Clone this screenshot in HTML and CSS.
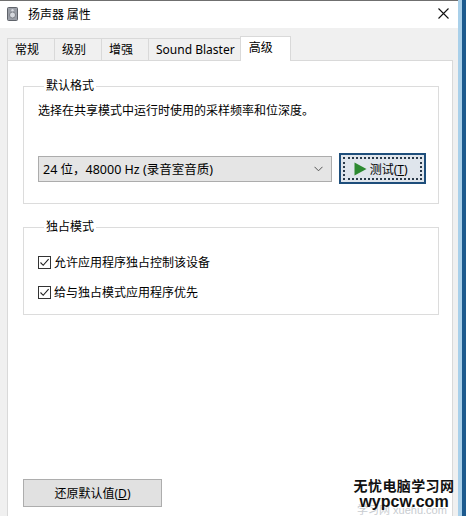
FILE: index.html
```html
<!DOCTYPE html>
<html lang="zh-CN">
<head>
<meta charset="utf-8">
<title>扬声器 属性</title>
<link rel="stylesheet" href="styles.css">
</head>
<body>
<div class="frame">
  <div class="window">
    <div class="titlebar">
      <svg class="app-icon" width="11" height="14" viewBox="0 0 11 14">
        <rect x="0.5" y="0.5" width="10" height="13" rx="1" fill="#9a9ea6" stroke="#5f636a"/>
        <circle cx="5.5" cy="8" r="3" fill="#d6d9de" stroke="#6d7179" stroke-width="0.8"/>
        <circle cx="5.5" cy="3.2" r="1.2" fill="#d6d9de"/>
      </svg>
      <span class="title">扬声器 属性</span>
      <svg class="close" width="11" height="11" viewBox="0 0 11 11">
        <path d="M0.5 0.5 L10.5 10.5 M10.5 0.5 L0.5 10.5" stroke="#111" stroke-width="1.1" fill="none"/>
      </svg>
    </div>
    <div class="content">
      <div class="tabs">
        <div class="tab">常规</div>
        <div class="tab">级别</div>
        <div class="tab">增强</div>
        <div class="tab">Sound Blaster</div>
        <div class="tab active">高级</div>
      </div>
      <div class="panel">
        <fieldset class="group group-format">
          <legend>默认格式</legend>
          <p class="desc">选择在共享模式中运行时使用的采样频率和位深度。</p>
          <div class="format-row">
            <div class="select">
              <span class="select-text">24 位，48000 Hz (录音室音质)</span>
              <svg class="chevron" width="9" height="6" viewBox="0 0 9 6">
                <path d="M0.5 0.8 L4.5 4.8 L8.5 0.8" stroke="#555" stroke-width="1" fill="none"/>
              </svg>
            </div>
            <button class="test-btn">
              <span class="focus-rect">
                <svg class="play" width="13" height="14" viewBox="0 0 13 14">
                  <path d="M0.5 0.5 L12.5 7 L0.5 13.5 Z" fill="#2c8a32"/>
                </svg>
                <span>测试(<u>T</u>)</span>
              </span>
            </button>
          </div>
        </fieldset>
        <fieldset class="group group-exclusive">
          <legend>独占模式</legend>
          <label class="check-row">
            <span class="checkbox"><svg width="11" height="11" viewBox="0 0 11 11"><path d="M1.5 5.5 L4.2 8.3 L9.6 2.2" stroke="#222" stroke-width="1.1" fill="none"/></svg></span>
            <span>允许应用程序独占控制该设备</span>
          </label>
          <label class="check-row">
            <span class="checkbox"><svg width="11" height="11" viewBox="0 0 11 11"><path d="M1.5 5.5 L4.2 8.3 L9.6 2.2" stroke="#222" stroke-width="1.1" fill="none"/></svg></span>
            <span>给与独占模式应用程序优先</span>
          </label>
        </fieldset>
        <button class="restore-btn">还原默认值(<u>D</u>)</button>
      </div>
    </div>
  </div>
  <div class="edge"></div>
  <div class="desktop"></div>
  <div class="watermark">
    <div class="wm-ghost">学习网 xuehu.com</div>
    <div class="wm-cn">无忧电脑学习网</div>
    <div class="wm-en">wypcw.com</div>
  </div>
</div>
</body>
</html>
```
FILE: styles.css
```css
* { box-sizing: border-box; }
html, body { margin: 0; padding: 0; }
body {
  width: 466px;
  height: 516px;
  overflow: hidden;
  font-family: "Noto Sans", "Noto Sans CJK SC", sans-serif;
  font-size: 12px;
  color: #000;
  background: #1d5a8f;
}
.frame {
  position: relative;
  display: flex;
  height: 516px;
  overflow: hidden;
}
.window {
  width: 458px;
  background: #f0f0f0;
  display: flex;
  flex-direction: column;
  overflow: hidden;
}
.edge { width: 4px; background: #a9d0ea; }
.desktop { flex: 1; background: #1c5a8e; }

.titlebar {
  flex: none;
  height: 28px;
  background: #fff;
  border-top: 1px solid #6f6f6f;
  display: flex;
  align-items: center;
  padding: 0 0 2px 7px;
}
.app-icon { flex: none; }
.title {
  margin-left: 10px;
  font-family: "Noto Sans CJK SC", sans-serif;
  font-size: 12px;
  line-height: 16px;
}
.close { margin-left: auto; margin-right: 9px; }

.content {
  flex: none;
  padding: 8px 5px 0 7px;
}
.tabs {
  display: flex;
  align-items: flex-end;
  height: 24px;
}
.tab {
  height: 22px;
  min-width: 48px;
  padding: 0 5px 0 7px;
  border: 1px solid #d9d9d9;
  border-bottom: none;
  margin-right: -1px;
  background: #f0f0f0;
  line-height: 21px;
  white-space: nowrap;
}
.tab.active {
  position: relative;
  z-index: 1;
  height: 25px;
  margin-bottom: -1px;
  background: #fff;
  line-height: 21px;
  padding-left: 8px;
  min-width: 51px;
}
.panel {
  height: 460px;
  width: 446px;
  border: 1px solid #d9d9d9;
  background: #fff;
  padding: 0 13px 0 15px;
}
.group {
  margin: 0;
  border: 1px solid #dcdcdc;
  min-width: 0;
}
.group legend {
  margin-left: 6px;
  padding: 0 2px;
  line-height: 16px;
}
.group-format {
  margin-top: 17px;
  padding: 0 12px 19px 14px;
}
.desc {
  margin: 9px 0 0 0;
  line-height: 16px;
  white-space: nowrap;
}
.format-row {
  margin-top: 34px;
  height: 31px;
  display: flex;
  align-items: center;
  gap: 7px;
}
.select {
  width: 295px;
  height: 26px;
  background: #e5e5e5;
  border: 1px solid #acacac;
  display: flex;
  align-items: center;
  padding: 0 8px 0 4px;
}
.select-text { font-size: 12.5px; white-space: nowrap; }
.chevron { margin-left: auto; }
.test-btn {
  width: 87px;
  height: 31px;
  padding: 2px;
  border: 2px solid #1e4e7b;
  background: #dfe5ec;
  font: inherit;
  color: #000;
}
.focus-rect {
  display: flex;
  height: 100%;
  align-items: center;
  justify-content: center;
  gap: 3px;
  border: 2px dotted #2a3a4a;
  padding-right: 4px;
}
.play { flex: none; }

.group-exclusive {
  margin-top: 15px;
  padding: 0 0 14px 14px;
}
.check-row {
  display: flex;
  align-items: center;
  height: 16px;
  margin-top: 14px;
  gap: 3px;
}
.check-row:first-of-type { margin-top: 19px; }
.checkbox {
  width: 13px;
  height: 13px;
  border: 1px solid #333;
  background: #fff;
  display: flex;
  align-items: center;
  justify-content: center;
}
.restore-btn {
  display: block;
  margin-top: 164px;
  width: 139px;
  height: 28px;
  background: #e1e1e1;
  border: 1px solid #adadad;
  font: inherit;
  color: #000;
  padding: 0;
}

.watermark {
  position: absolute;
  right: 9px;
  bottom: 5px;
  width: 106px;
  height: 34px;
  text-align: center;
}
.wm-ghost {
  position: absolute;
  left: 6px;
  bottom: -5px;
  font-family: "Liberation Sans", "Noto Sans CJK SC", sans-serif;
  font-size: 11px;
  line-height: 12px;
  color: #c8ccd0;
  white-space: nowrap;
}
.wm-cn {
  position: relative;
  font-family: "Noto Sans CJK SC", sans-serif;
  font-weight: 700;
  font-size: 14px;
  letter-spacing: 0.4px;
  line-height: 17px;
  color: #111;
}
.wm-en {
  position: relative;
  font-family: "Liberation Sans", sans-serif;
  font-weight: 700;
  font-size: 16px;
  line-height: 15px;
  color: #111;
}
```
